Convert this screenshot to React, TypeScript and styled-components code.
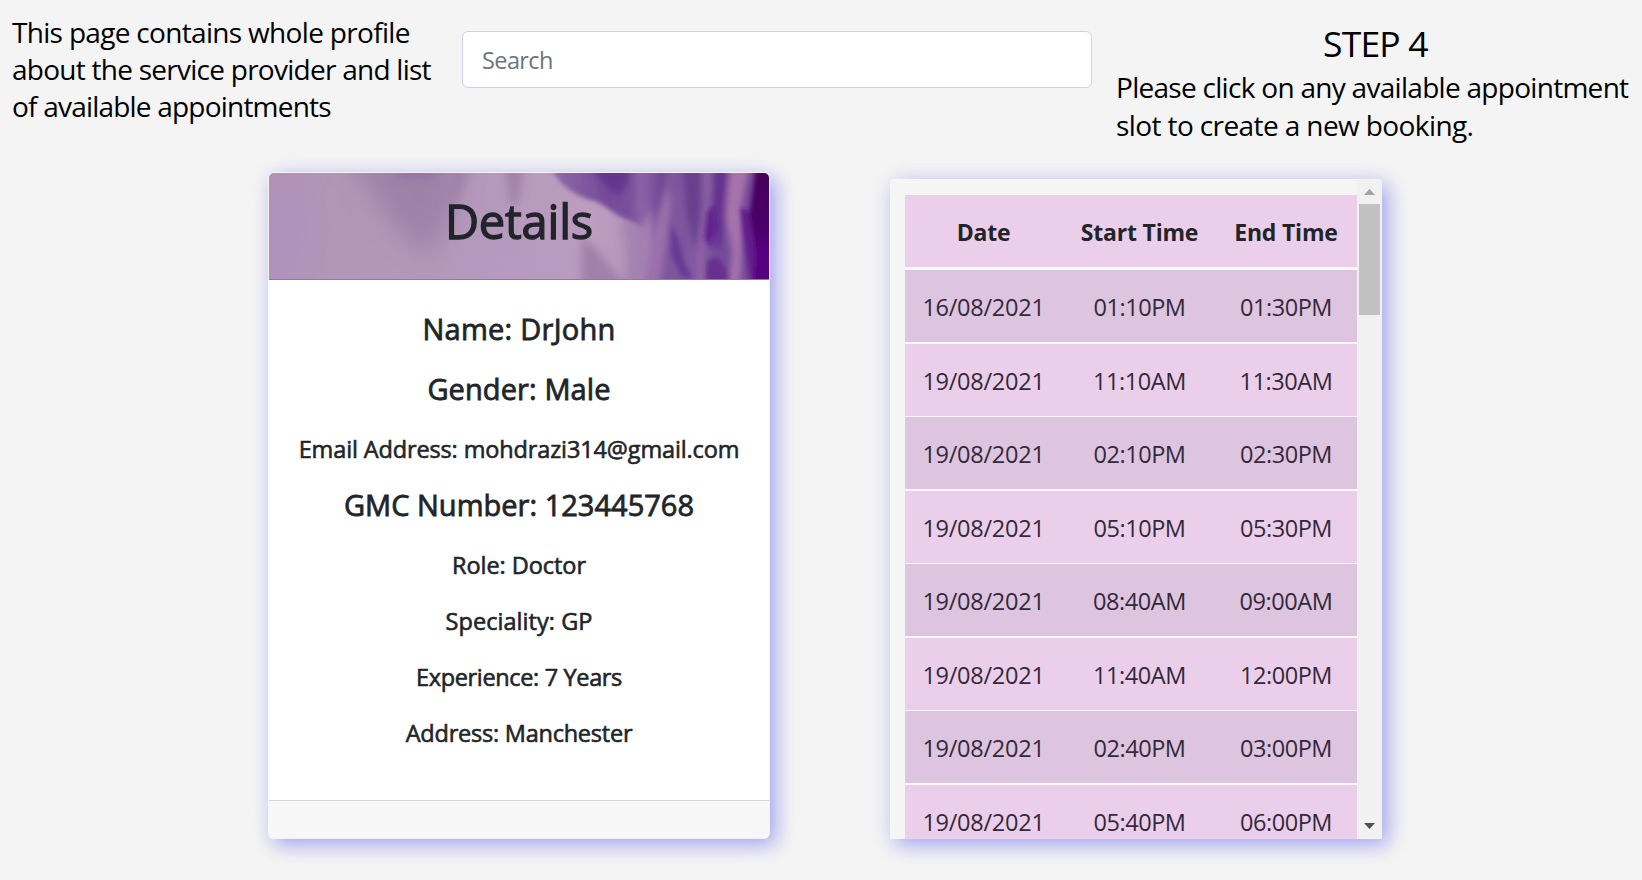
import React from 'react';
import styled, { createGlobalStyle } from 'styled-components';

const GlobalStyle = createGlobalStyle`
  * { box-sizing: border-box; }
  html, body { margin: 0; background: #f4f4f4; overflow: hidden; }
  body {
    font-family: 'Open Sans', 'Noto Sans', sans-serif;
    color: #212529;
    font-kerning: normal;
  }
`;

const Page = styled.div`
  width: 1642px;
  height: 880px;
  overflow: hidden;
  display: flex;
  flex-direction: column;
`;

const TopBar = styled.header`
  display: flex;
  align-items: flex-start;
  height: 172px;
  flex: none;
  color: #000;
`;

const Note = styled.p<{ $lineHeight: number }>`
  margin: 0;
  font-size: 28px;
  line-height: ${(p) => p.$lineHeight}px;
  white-space: nowrap;
`;

const NoteLine = styled.span<{ $spacing: number }>`
  display: block;
  letter-spacing: ${(p) => p.$spacing}px;
`;

const Intro = styled.div`
  width: 462px;
  padding: 14px 0 0 12px;
`;

const SearchInput = styled.input`
  width: 630px;
  height: 57px;
  margin-top: 31px;
  padding: 1px 18px 0 19px;
  border: 1px solid #ced4da;
  border-radius: 6px;
  background: #fff;
  font: inherit;
  font-size: 23.5px;
  letter-spacing: -0.6px;
  color: #212529;
  outline: none;
  &::placeholder { color: #6c757d; opacity: 1; }
`;

const Step = styled.div`
  margin-left: 24px;
  padding-top: 19px;
`;

const StepTitle = styled.h1`
  margin: 0 0 1px 207px;
  font-size: 35.5px;
  font-weight: 400;
  line-height: 48px;
  letter-spacing: -0.8px;
`;

const Columns = styled.main`
  display: flex;
  align-items: flex-start;
  padding-left: 268px;
`;

const shadow = '6px 6px 19px rgba(10, 10, 235, 0.3), 2px 2px 28px rgba(60, 60, 210, 0.07)';

const Card = styled.section`
  width: 502px;
  height: 667px;
  display: flex;
  flex-direction: column;
  border: 1px solid rgba(255, 255, 255, 0.75);
  border-radius: 6px;
  background: #fff;
  background-clip: padding-box;
  overflow: hidden;
  box-shadow: ${shadow};
`;

const CardHeader = styled.div`
  position: relative;
  height: 107px;
  flex: none;
  border-bottom: 1px solid #91799a;
  text-align: center;
`;

const Petals = styled.svg`
  position: absolute;
  inset: 0;
  width: 100%;
  height: 100%;
`;

const CardTitle = styled.h2`
  position: relative;
  margin: 0;
  padding-top: 16px;
  font-size: 47px;
  font-weight: 400;
  line-height: 64px;
  letter-spacing: -0.2px;
  -webkit-text-stroke: 1.3px #212529;
`;

const CardBody = styled.div`
  flex: 1;
  padding-top: 32px;
  text-align: center;
`;

const Field = styled.p<{ $large?: boolean; $gap: number; $spacing: number }>`
  margin: 0 0 ${(p) => p.$gap}px;
  font-size: ${(p) => (p.$large ? 29 : 23.5)}px;
  line-height: ${(p) => (p.$large ? 34 : 28)}px;
  letter-spacing: ${(p) => p.$spacing}px;
  white-space: nowrap;
  -webkit-text-stroke: ${(p) => (p.$large ? 0.8 : 0.6)}px #212529;
`;

const CardFooter = styled.div`
  height: 38px;
  flex: none;
  border-top: 1px solid #d4d6d8;
  background: #f7f7f7;
`;

const SlotPanel = styled.section`
  display: flex;
  width: 492px;
  height: 660px;
  margin: 7px 0 0 120px;
  background: #f5f5f5;
  overflow: hidden;
  box-shadow: ${shadow};
`;

const SlotArea = styled.div`
  width: 467px;
  padding: 16px 0 0 15px;
`;

const SlotTable = styled.div`
  background: #fbf7fb;
`;

const SlotRow = styled.div<{ $dark?: boolean; $line: number; $head?: boolean }>`
  display: grid;
  grid-template-columns: 157px 155px 138px;
  height: 72px;
  padding-top: 1px;
  margin-bottom: ${(p) => p.$line}px;
  text-align: center;
  line-height: 72px;
  background: ${(p) => (p.$dark ? '#ddc4df' : '#ebcfea')};
  font-size: ${(p) => (p.$head ? 23 : 23.5)}px;
  font-weight: ${(p) => (p.$head ? 700 : 400)};
  letter-spacing: ${(p) => (p.$head ? -0.2 : -0.45)}px;
  color: ${(p) => (p.$head ? '#212529' : '#33293a')};
`;

const DateCell = styled.span`
  letter-spacing: -0.25px;
`;

const Track = styled.div`
  width: 25px;
  display: flex;
  flex-direction: column;
  align-items: center;
  background: #f1f1f1;
`;

const ArrowUp = styled.svg`
  width: 11px;
  height: 6px;
  margin: 10px 0 9px;
`;

const Thumb = styled.div`
  width: 21px;
  height: 111px;
  background: #c1c1c1;
`;

const ArrowDown = styled(ArrowUp)`
  margin: auto 0 10px;
`;

const fields = [
  { text: 'Name: DrJohn', large: true, gap: 26, spacing: 0.25 },
  { text: 'Gender: Male', large: true, gap: 29, spacing: 0.1 },
  { text: 'Email Address: mohdrazi314@gmail.com', gap: 25, spacing: -0.13 },
  { text: 'GMC Number: 123445768', large: true, gap: 29, spacing: 0.02 },
  { text: 'Role: Doctor', gap: 28, spacing: -0.05 },
  { text: 'Speciality: GP', gap: 28, spacing: 0.05 },
  { text: 'Experience: 7 Years', gap: 28, spacing: -0.35 },
  { text: 'Address: Manchester', gap: 0, spacing: -0.23 },
];

const slots = [
  ['16/08/2021', '01:10PM', '01:30PM'],
  ['19/08/2021', '11:10AM', '11:30AM'],
  ['19/08/2021', '02:10PM', '02:30PM'],
  ['19/08/2021', '05:10PM', '05:30PM'],
  ['19/08/2021', '08:40AM', '09:00AM'],
  ['19/08/2021', '11:40AM', '12:00PM'],
  ['19/08/2021', '02:40PM', '03:00PM'],
  ['19/08/2021', '05:40PM', '06:00PM'],
];

function PetalBackground() {
  return (
    <Petals viewBox="0 0 501 106" preserveAspectRatio="none">
      <defs>
        <linearGradient id="base" x1="0" x2="1">
          <stop offset="0" stopColor="#b193bc" />
          <stop offset="0.15" stopColor="#b197b7" />
          <stop offset="0.45" stopColor="#b599bc" />
          <stop offset="0.65" stopColor="#bd9dc0" />
          <stop offset="0.75" stopColor="#b391b8" />
        </linearGradient>
        <linearGradient id="petal" x1="0" x2="1">
          <stop offset="0" stopColor="#8e6ca6" />
          <stop offset="0.25" stopColor="#764b9a" />
          <stop offset="0.5" stopColor="#7f589f" />
          <stop offset="0.75" stopColor="#774f99" />
          <stop offset="1" stopColor="#6d3a91" />
        </linearGradient>
        <linearGradient id="edge" x1="0" x2="0" y1="0" y2="1">
          <stop offset="0" stopColor="#450057" />
          <stop offset="0.5" stopColor="#4b0069" />
          <stop offset="0.75" stopColor="#570082" />
          <stop offset="1" stopColor="#560080" />
        </linearGradient>
        <filter id="soft" x="-50%" y="-50%" width="200%" height="200%"><feGaussianBlur stdDeviation="2" /></filter>
        <filter id="streak" x="-50%" y="-50%" width="200%" height="200%"><feGaussianBlur stdDeviation="3 5" /></filter>
        <filter id="wide" x="-50%" y="-50%" width="200%" height="200%"><feGaussianBlur stdDeviation="12" /></filter>
        <filter id="mid" x="-80%" y="-50%" width="260%" height="200%"><feGaussianBlur stdDeviation="4" /></filter>
      </defs>
      <rect width="501" height="106" fill="url(#base)" />
      <g filter="url(#wide)">
        <path d="M75 -20 L195 -20 L182 40 L160 84 L128 56 Z" fill="#9879a1" opacity="0.75" />
        <ellipse cx="8" cy="0" rx="28" ry="10" fill="#b88fb0" opacity="0.8" />
        <ellipse cx="16" cy="56" rx="18" ry="30" fill="#ae90c2" opacity="0.5" />
        <ellipse cx="250" cy="90" rx="60" ry="14" fill="#b89ac4" opacity="0.7" />
      </g>
      <g filter="url(#mid)">
        <ellipse cx="148" cy="0" rx="22" ry="6" fill="#9270a0" opacity="0.8" />
        <path d="M182 -6 L202 -6 L190 26 L176 38 Z" fill="#a07fa6" opacity="0.8" />
        <path d="M236 -8 L255 -8 L250 30 L241 30 Z" fill="#a17ea5" opacity="0.85" />
        <path d="M352 50 Q362 80 356 120 L392 120 L392 40 Z" fill="#a585b2" />
      </g>
      <g filter="url(#mid)">
        <path d="M313 120 L313 66 Q325 70 342 94 L362 120 Z" fill="#a080a7" />
      </g>
      <g filter="url(#soft)">
        <path
          d="M282 -6 C290 10 304 22 322 27 C338 30 345 44 366 49 C380 52 382 60 378 76 L374 115 L510 115 L510 -6 Z"
          fill="url(#petal)"
        />
      </g>
      <g filter="url(#streak)">
        <path d="M322 -8 L360 -8 Q362 14 350 22 Q334 14 322 -8 Z" fill="#64348f" />
        <path d="M368 -8 L380 -8 L381 40 L374 60 L366 40 Z" fill="#8a61a6" />
        <path d="M364 120 L366 66 L384 36 L382 90 L374 120 Z" fill="#a380b0" />
        <path d="M376 120 L384 62 L399 14 L403 26 L398 70 L390 120 Z" fill="#9b70ab" />
        <path d="M387 -8 L400 -8 L396 20 L388 50 Z" fill="#714a97" />
        <path d="M414 -8 L432 -8 L433 38 L428 76 L418 40 Z" fill="#68408f" />
        <path d="M408 -8 L412 -8 L416 60 L410 50 Z" fill="#8054a0" />
        <path d="M420 120 L420 75 L430 70 L434 120 Z" fill="#8459a3" />
        <path d="M429 116 L430 78 L436 28 L436 -8 L444 -8 L439 52 L436 116 Z" fill="#9262a5" />
        <path d="M462 -8 L482 -8 L474 30 L474 74 L472 116 L460 116 L464 78 L457 44 Z" fill="#a673ac" />
        <path d="M445 -8 L460 -8 L457 50 L452 78 L444 72 L445 40 Z" fill="#653090" />
      </g>
      <g filter="url(#soft)">
        <path d="M403 52 L411 68 L416 90 L425 106 L414 104 L403 82 Z" fill="#5f3190" opacity="0.75" />
        <path d="M439 40 L446 32 L447 56 L442 74 L436 65 Z" fill="#581389" opacity="0.75" />
        <path d="M439 88 L450 84 L458 96 L460 112 L438 112 Z" fill="#642a8e" opacity="0.85" />
        <path d="M472 34 L484 40 L510 30 L510 115 L484 115 L478 80 Z" fill="#611b8a" opacity="0.9" />
        <path d="M488 -6 L510 -6 L510 115 L486 115 L488 80 L482 40 Z" fill="url(#edge)" />
      </g>
    </Petals>
  );
}

export default function App() {
  return (
    <Page>
      <GlobalStyle />
      <TopBar>
        <Intro>
          <Note $lineHeight={37}>
            <NoteLine $spacing={-0.68}>This page contains whole profile</NoteLine>
            <NoteLine $spacing={-0.74}>about the service provider and list</NoteLine>
            <NoteLine $spacing={-0.79}>of available appointments</NoteLine>
          </Note>
        </Intro>
        <SearchInput placeholder="Search" />
        <Step>
          <StepTitle>STEP 4</StepTitle>
          <Note $lineHeight={38}>
            <NoteLine $spacing={-0.71}>Please click on any available appointment</NoteLine>
            <NoteLine $spacing={-0.6}>slot to create a new booking.</NoteLine>
          </Note>
        </Step>
      </TopBar>
      <Columns>
        <Card>
          <CardHeader>
            <PetalBackground />
            <CardTitle>Details</CardTitle>
          </CardHeader>
          <CardBody>
            {fields.map((f) => (
              <Field key={f.text} $large={f.large} $gap={f.gap} $spacing={f.spacing}>
                {f.text}
              </Field>
            ))}
          </CardBody>
          <CardFooter />
        </Card>
        <SlotPanel>
          <SlotArea>
            <SlotTable>
              <SlotRow $head $line={3}>
                <span>Date</span>
                <span>Start Time</span>
                <span>End Time</span>
              </SlotRow>
              {slots.map(([date, start, end], i) => (
                <SlotRow key={i} $dark={i % 2 === 0} $line={i % 2 === 0 ? 2 : 1}>
                  <DateCell>{date}</DateCell>
                  <span>{start}</span>
                  <span>{end}</span>
                </SlotRow>
              ))}
            </SlotTable>
          </SlotArea>
          <Track>
            <ArrowUp viewBox="0 0 11 6">
              <path d="M5.5 0 L11 6 L0 6 Z" fill="#a3a3a3" />
            </ArrowUp>
            <Thumb />
            <ArrowDown viewBox="0 0 11 6">
              <path d="M0 0 L11 0 L5.5 6 Z" fill="#505050" />
            </ArrowDown>
          </Track>
        </SlotPanel>
      </Columns>
    </Page>
  );
}
